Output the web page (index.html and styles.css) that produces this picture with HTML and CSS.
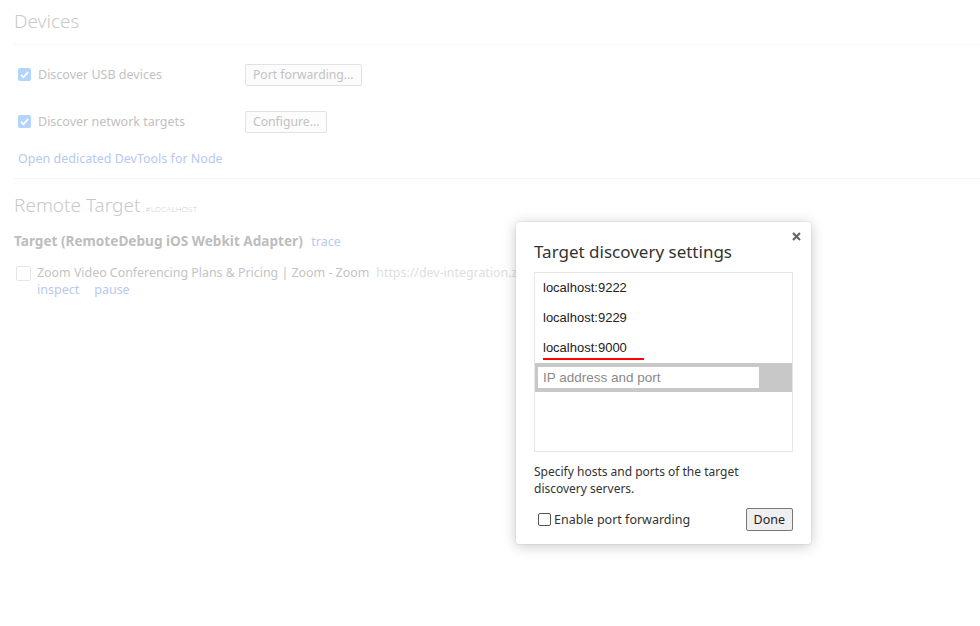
FILE: index.html
```html
<!DOCTYPE html>
<html>
<head>
<meta charset="utf-8">
<link rel="stylesheet" href="styles.css">
</head>
<body>
<div class="page">
  <section class="section devices">
    <h1 class="heading">Devices</h1>
    <div class="rows">
      <div class="opt-row">
        <label class="opt"><span class="cb cb-on"><svg viewBox="0 0 13 13" width="13" height="13"><path d="M3 6.8l2.4 2.4L10.2 4" fill="none" stroke="#fff" stroke-width="1.8"/></svg></span>Discover USB devices</label>
        <button class="btn">Port forwarding...</button>
      </div>
      <div class="opt-row">
        <label class="opt"><span class="cb cb-on"><svg viewBox="0 0 13 13" width="13" height="13"><path d="M3 6.8l2.4 2.4L10.2 4" fill="none" stroke="#fff" stroke-width="1.8"/></svg></span>Discover network targets</label>
        <button class="btn">Configure...</button>
      </div>
      <a class="link node-link">Open dedicated DevTools for Node</a>
    </div>
  </section>
  <section class="section remote">
    <h1 class="heading">Remote Target <span class="tag">#LOCALHOST</span></h1>
    <div class="target-title">Target (RemoteDebug iOS Webkit Adapter) <a class="link trace">trace</a></div>
    <div class="page-row">
      <span class="cb cb-off"></span>
      <div class="page-info">
        <div class="page-line"><span class="page-name">Zoom Video Conferencing Plans &amp; Pricing &#124; Zoom - Zoom</span><span class="page-url">https://dev-integration.zoom.us/pricing</span></div>
        <div class="actions"><a class="link">inspect</a><a class="link">pause</a></div>
      </div>
    </div>
  </section>
</div>

<div class="dialog">
  <div class="close"><svg viewBox="0 0 9 9" width="9" height="9"><path d="M1 1L8 8M8 1L1 8" stroke="#666" stroke-width="2.2"/></svg></div>
  <div class="dlg-title">Target discovery settings</div>
  <div class="list">
    <div class="item">localhost:9222</div>
    <div class="item">localhost:9229</div>
    <div class="item"><span class="squiggle">localhost:9000</span></div>
    <div class="edit-row"><div class="input">IP address and port</div></div>
  </div>
  <p class="help">Specify hosts and ports of the target discovery servers.</p>
  <div class="footer">
    <label class="fwd"><span class="cb2"></span>Enable port forwarding</label>
    <button class="done">Done</button>
  </div>
</div>
</body>
</html>
```
FILE: styles.css
```css
html, body { margin: 0; padding: 0; background: #fff; }
body {
  font-family: "Segoe UI", "Noto Sans", "Open Sans", sans-serif;
  font-size: 12px;
  width: 980px;
  height: 626px;
  overflow: hidden;
  position: relative;
}
.page { padding: 0 0 0 14px; }
.section { border-bottom: 1px solid #f6f6f6; }
.heading {
  margin: 0;
  font-weight: 300;
  font-size: 19px;
  color: #c9c9c9;
  height: 44px;
  line-height: 42px;
  border-bottom: 1px solid #f6f6f6;
}
.remote .heading { border-bottom: none; height: 52px; line-height: 52px; }
.tag { font-size: 8px; color: #d4d4d4; letter-spacing: 0.2px; margin-left: 0; }
.rows { padding: 6px 0 8px 4px; }
.opt-row { display: flex; align-items: center; height: 47px; }
.opt { display: flex; align-items: center; width: 227px; color: #c1c1c1; font-size: 12.5px; }
.cb { display: inline-block; width: 13px; height: 13px; border-radius: 2px; box-sizing: border-box; margin-right: 7px; }
.cb-on { background: #b3d4fc; }
.cb svg { display: block; }
.cb-off { border: 1px solid #e6e6e6; width: 15px; height: 15px; background: #fff; margin-right: 6px; margin-top: 2px; }
.btn {
  font-family: inherit;
  font-size: 12.2px;
  color: #c2c2c2;
  background: #fcfcfc;
  border: 1px solid #e2e2e2;
  border-radius: 2px;
  height: 22px;
  padding: 0 7px;
}
.link { color: #b9c8ef; font-size: 12.5px; text-decoration: none; }
.node-link { display: block; height: 22px; line-height: 22px; margin-top: 3px; }
.target-title { font-weight: bold; color: #bdbdbd; font-size: 13.6px; line-height: 20px; }
.trace { font-weight: normal; margin-left: 5px; }
.page-row { display: flex; align-items: flex-start; padding: 12px 0 0 2px; }
.page-info { line-height: 17px; }
.page-line { white-space: nowrap; }
.page-name { color: #c4c4c4; font-size: 12.4px; }
.page-url { color: #dedede; font-size: 12.4px; margin-left: 7px; }
.actions .link { margin-right: 15px; }
.remote { border-bottom: none; }

.dialog {
  position: absolute;
  left: 516px;
  top: 222px;
  width: 295px;
  height: 322px;
  box-sizing: border-box;
  background: #fff;
  border-radius: 3px;
  box-shadow: 0 0 0 1px rgba(0,0,0,0.04), 0 2px 14px rgba(0,0,0,0.22);
  padding: 0 18px;
}
.close {
  position: absolute;
  left: 276px;
  top: 10px;
  width: 9px;
  height: 9px;
}
.close svg { display: block; }
.dlg-title {
  font-size: 17px;
  color: #333;
  padding-top: 18px;
  height: 32px;
  line-height: 24px;
}
.list {
  border: 1px solid #e6e6e6;
  height: 180px;
  box-sizing: border-box;
  font-family: "Liberation Sans", Arial, sans-serif;
  font-size: 13px;
  color: #222;
  padding-top: 1px;
}
.item { height: 30px; line-height: 28px; padding-left: 8px; }
.squiggle { position: relative; display: inline-block; }
.squiggle::after {
  content: "";
  position: absolute;
  left: 0;
  top: 24px;
  width: 101px;
  height: 2px;
  background: #f00;
}
.edit-row { background: #c8c8c8; height: 29px; padding: 4px 0 0 3px; box-sizing: border-box; margin-top: -1px; }
.input {
  background: #fff;
  width: 221px;
  height: 21px;
  line-height: 21px;
  padding-left: 5px;
  box-sizing: border-box;
  color: #8a8a8a;
  font-size: 13.5px;
}
.help { margin: 11px 0 0; color: #333; font-size: 12px; line-height: 17px; width: 220px; }
.footer { display: flex; justify-content: space-between; align-items: center; margin-top: 11px; }
.fwd { display: flex; align-items: center; color: #333; font-size: 12.5px; padding-left: 4px; }
.cb2 { width: 13px; height: 13px; box-sizing: border-box; border: 1px solid #555; border-radius: 2px; margin-right: 3px; }
.done {
  font-family: inherit;
  font-size: 12.5px;
  color: #222;
  background: #efefef;
  border: 1px solid #777;
  border-radius: 2px;
  height: 23px;
  padding: 0 7px;
}
```
